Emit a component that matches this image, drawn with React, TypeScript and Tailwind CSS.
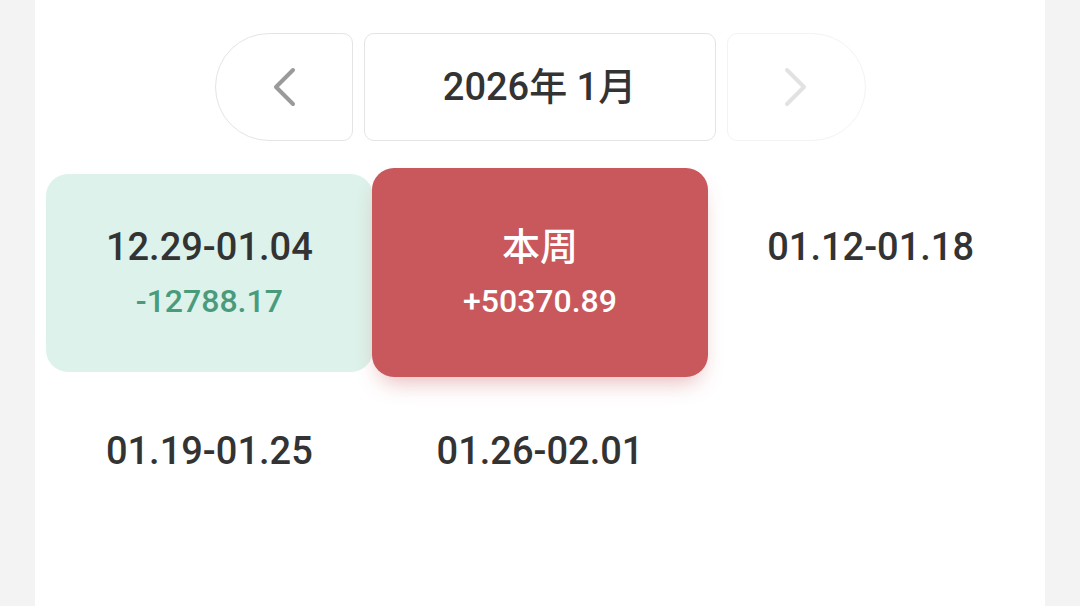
type Week = {
  label: string;
  amount?: string;
  kind?: "up" | "down";
  current?: boolean;
};

const weeks: Week[] = [
  { label: "12.29-01.04", amount: "-12788.17", kind: "down" },
  { label: "本周", amount: "+50370.89", kind: "up", current: true },
  { label: "01.12-01.18" },
  { label: "01.19-01.25" },
  { label: "01.26-02.01" },
];

const Chevron = ({ dir, color }: { dir: "left" | "right"; color: string }) => (
  <svg width="26" height="40" viewBox="0 0 26 40" fill="none">
    <path
      d={dir === "left" ? "M22 3 L5 20 L22 37" : "M4 3 L21 20 L4 37"}
      stroke={color}
      strokeWidth="4"
      strokeLinecap="round"
      strokeLinejoin="round"
    />
  </svg>
);

const WeekCell = ({ week }: { week: Week }) => {
  let card = "rounded-[22px] flex flex-col items-center justify-center";
  let titleColor = "text-[#333333]";
  let amountColor = "text-transparent";
  if (week.current) {
    card += " bg-[#c8585c] h-[209px] -mt-[6px] -mx-[5px] shadow-[0_12px_22px_-8px_rgba(200,88,92,0.45)]";
    titleColor = "text-white";
    amountColor = "text-white";
  } else {
    card += " h-full";
    if (week.kind === "down") {
      card += " bg-[#dcf2ea]";
      amountColor = "text-[#4a9b7c]";
    }
  }

  return (
    <div className="h-[204px] px-[2px] py-[3px]">
      <div className={card}>
        <div className={`text-[38px] leading-[44px] font-medium ${titleColor}`}>{week.label}</div>
        <div className={`mt-[12px] text-[32px] leading-[40px] font-medium ${amountColor}`}>
          {week.amount ?? "\u00a0"}
        </div>
      </div>
    </div>
  );
};

export default function App() {
  return (
    <div
      className="min-h-screen bg-[#f3f3f3] px-[35px]"
      style={{ fontFamily: 'Roboto, "Noto Sans CJK SC", sans-serif' }}
    >
      <div className="bg-white h-[606px] px-[9px] pt-[33px] overflow-hidden">
        <div className="flex justify-center gap-[11px]">
          <button className="w-[138px] h-[108px] rounded-l-[54px] rounded-r-[10px] border border-[#e4e4e4] flex items-center justify-center bg-white">
            <Chevron dir="left" color="#9a9a9a" />
          </button>
          <div className="w-[352px] h-[108px] rounded-[10px] border border-[#e4e4e4] flex items-center justify-center text-[38px] font-medium text-[#333333]">
            2026年 1月
          </div>
          <button className="w-[139px] h-[108px] rounded-r-[54px] rounded-l-[10px] border border-[#f3f3f3] flex items-center justify-center bg-white">
            <Chevron dir="right" color="#e2e2e2" />
          </button>
        </div>

        <div className="mt-[30px] grid grid-cols-3">
          {weeks.map((w) => (
            <WeekCell key={w.label} week={w} />
          ))}
        </div>
      </div>
    </div>
  );
}
